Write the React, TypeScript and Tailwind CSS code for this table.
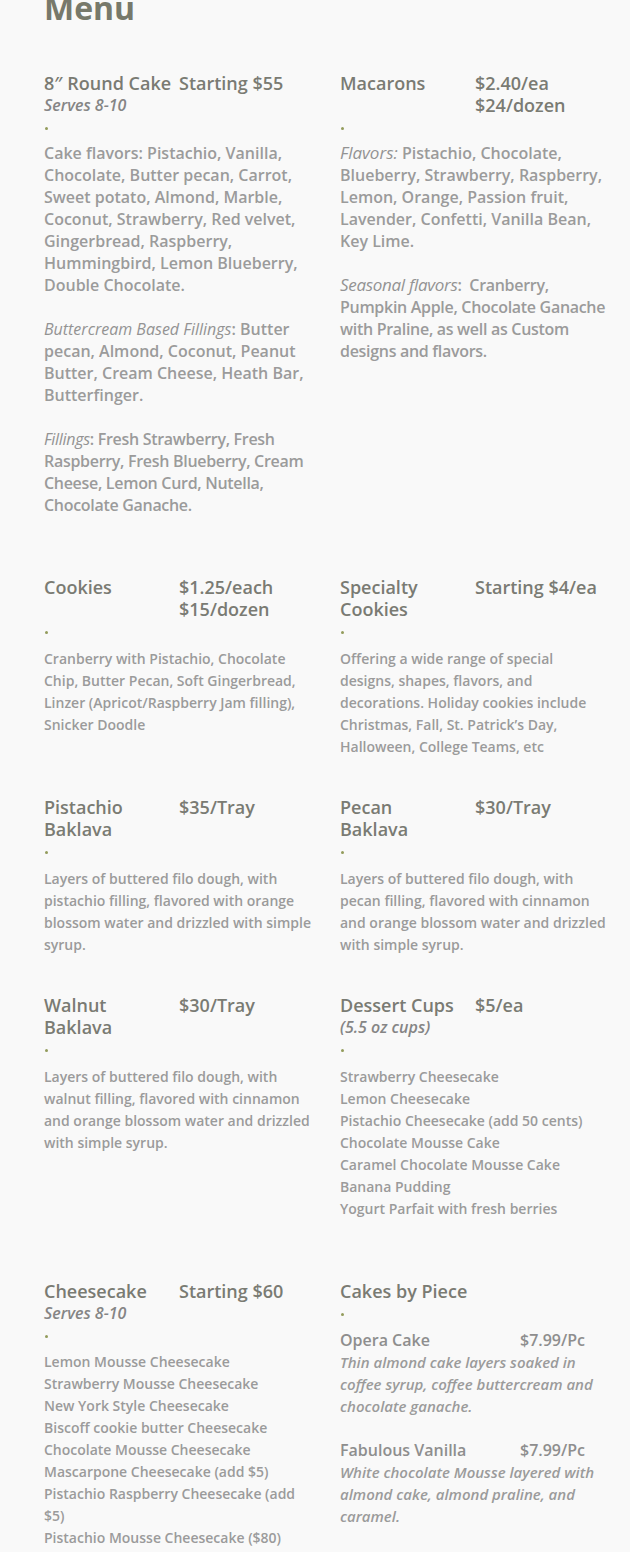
import React from "react";

type ItemProps = {
  name: React.ReactNode;
  price: React.ReactNode;
  sub?: React.ReactNode;
  dotH?: string;
  children: React.ReactNode;
};

function Dot({ h }: { h: string }) {
  return (
    <div className={h === "26" ? "h-[26px] pt-[11px]" : h === "27" ? "h-[27px] pt-[11px]" : "h-[28px] pt-[11px]"}>
      <div className="ml-[1px] h-[3px] w-[3px] rounded-full bg-[#939c5c]" />
    </div>
  );
}

function Item({ name, price, sub, dotH = "28", children }: ItemProps) {
  return (
    <div>
      <div className="flex text-[18px] leading-[22px] font-semibold text-[#7a7b73]">
        <div className="w-[135px] shrink-0">{name}</div>
        <div>{price}</div>
      </div>
      {sub && (
        <div className="text-[16px] leading-[22px] italic font-semibold text-[#858585]">{sub}</div>
      )}
      <Dot h={dotH} />
      {children}
    </div>
  );
}

const body14 = "text-[14px] leading-[22px] font-semibold text-[#9b9b9b]";
const body16 = "text-[16px] leading-[22px] font-semibold text-[#9b9b9b]";

export default function App() {
  return (
    <div className="min-h-screen w-full overflow-hidden bg-[#f9f9f9] font-['Open_Sans',sans-serif]">
      <h1 className="-mt-[12px] pl-[44px] text-[32px] leading-[40px] font-bold text-[#77796b]">Menu</h1>
      <div className="mt-[44px] grid grid-cols-[268px_268px] gap-x-[28px] gap-y-[38px] pl-[44px]">
        {/* Row 1 */}
        <Item name="8″ Round Cake" price="Starting $55" sub="Serves 8-10" dotH="26">
          <div className={body16}>
            <p className="mb-[22px]">Cake flavors: Pistachio, Vanilla, Chocolate, Butter pecan, Carrot, Sweet potato, Almond, Marble, Coconut, Strawberry, Red velvet, Gingerbread, Raspberry, Hummingbird, Lemon Blueberry, Double Chocolate.</p>
            <p className="mb-[22px]">
              <em className="font-medium text-[#939393]">Buttercream Based Fillings</em>: Butter pecan, Almond, Coconut, Peanut Butter, Cream Cheese, Heath Bar, Butterfinger.
            </p>
            <p className="mb-[22px] whitespace-nowrap tracking-[-0.3px]">
              <em className="font-medium text-[#939393]">Fillings</em>: Fresh Strawberry, Fresh
              <br />
              Raspberry, Fresh Blueberry, Cream
              <br />
              Cheese, Lemon Curd, Nutella,
              <br />
              Chocolate Ganache.
            </p>
          </div>
        </Item>
        <Item name="Macarons" price={<>$2.40/ea<br />$24/dozen</>} dotH="26">
          <div className={body16}>
            <p className="mb-[22px]">
              <em className="text-[17px] font-medium text-[#939393]">Flavors:</em>{"  "}Pistachio, Chocolate, Blueberry, Strawberry, Raspberry, Lemon, Orange, Passion fruit, Lavender, Confetti, Vanilla Bean, Key Lime.
            </p>
            <p className="whitespace-nowrap tracking-[-0.3px]">
              <em className="text-[17px] font-medium text-[#939393]">Seasonal flavors</em>:&nbsp; Cranberry,
              <br />
              Pumpkin Apple, Chocolate Ganache
              <br />
              with Praline, as well as Custom
              <br />
              designs and flavors.
            </p>
          </div>
        </Item>

        {/* Row 2 */}
        <Item name="Cookies" price={<>$1.25/each<br />$15/dozen</>}>
          <p className={body14}>Cranberry with Pistachio, Chocolate Chip, Butter Pecan, Soft Gingerbread, Linzer (Apricot/Raspberry Jam filling), Snicker Doodle</p>
        </Item>
        <Item name={<>Specialty<br />Cookies</>} price="Starting $4/ea">
          <p className={body14}>Offering a wide range of special designs, shapes, flavors, and decorations. Holiday cookies include Christmas, Fall, St. Patrick’s Day, Halloween, College Teams, etc</p>
        </Item>

        {/* Row 3 */}
        <Item name={<>Pistachio<br />Baklava</>} price="$35/Tray">
          <p className={body14}>Layers of buttered filo dough, with pistachio filling, flavored with orange blossom water and drizzled with simple syrup.</p>
        </Item>
        <Item name={<>Pecan<br />Baklava</>} price="$30/Tray">
          <p className={body14}>Layers of buttered filo dough, with pecan filling, flavored with cinnamon and orange blossom water and drizzled with simple syrup.</p>
        </Item>

        {/* Row 4 */}
        <Item name={<>Walnut<br />Baklava</>} price="$30/Tray">
          <p className={body14}>Layers of buttered filo dough, with walnut filling, flavored with cinnamon and orange blossom water and drizzled with simple syrup.</p>
        </Item>
        <Item name="Dessert Cups" price="$5/ea" sub="(5.5 oz cups)">
          <ul className={body14 + " mb-[22px]"}>
            <li>Strawberry Cheesecake</li>
            <li>Lemon Cheesecake</li>
            <li>Pistachio Cheesecake (add 50 cents)</li>
            <li>Chocolate Mousse Cake</li>
            <li>Caramel Chocolate Mousse Cake</li>
            <li>Banana Pudding</li>
            <li>Yogurt Parfait with fresh berries</li>
          </ul>
        </Item>

        {/* Row 5 */}
        <Item name="Cheesecake" price="Starting $60" sub="Serves 8-10" dotH="27">
          <ul className={body14}>
            <li>Lemon Mousse Cheesecake</li>
            <li>Strawberry Mousse Cheesecake</li>
            <li>New York Style Cheesecake</li>
            <li>Biscoff cookie butter Cheesecake</li>
            <li>Chocolate Mousse Cheesecake</li>
            <li>Mascarpone Cheesecake (add $5)</li>
            <li>Pistachio Raspberry Cheesecake (add $5)</li>
            <li>Pistachio Mousse Cheesecake ($80)</li>
          </ul>
        </Item>
        <div>
          <div className="text-[18px] leading-[22px] font-semibold text-[#7a7b73]">Cakes by Piece</div>
          <Dot h="27" />
          <div className="mb-[22px]">
            <div className="flex text-[16px] leading-[22px] font-semibold text-[#8e8e8e]">
              <div className="w-[180px] shrink-0">Opera Cake</div>
              <div>$7.99/Pc</div>
            </div>
            <p className="text-[15px] leading-[22px] italic font-semibold text-[#9b9b9b]">Thin almond cake layers soaked in coffee syrup, coffee buttercream and chocolate ganache.</p>
          </div>
          <div>
            <div className="flex text-[16px] leading-[22px] font-semibold text-[#8e8e8e]">
              <div className="w-[180px] shrink-0">Fabulous Vanilla</div>
              <div>$7.99/Pc</div>
            </div>
            <p className="text-[15px] leading-[22px] italic font-semibold text-[#9b9b9b]">White chocolate Mousse layered with almond cake, almond praline, and caramel.</p>
          </div>
        </div>
      </div>
    </div>
  );
}
